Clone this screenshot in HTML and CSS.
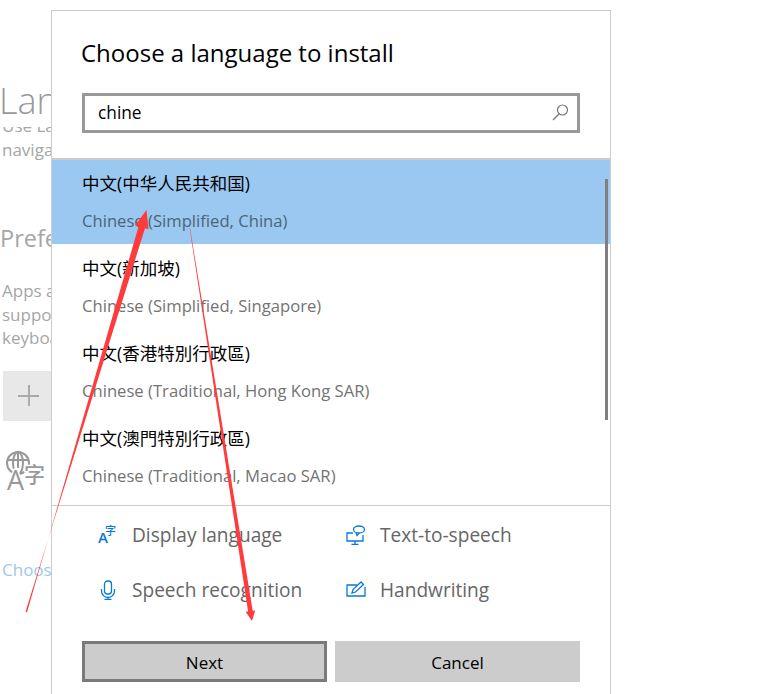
FILE: index.html
```html
<!DOCTYPE html>
<html lang="en">
<head>
  <meta charset="UTF-8">
  <meta name="viewport" content="width=device-width, initial-scale=1.0">
  <title>Choose a language to install</title>
  <link rel="stylesheet" href="styles.css">
</head>
<body>
  <!-- settings page behind the dialog, cut off at the dialog edge -->
  <aside class="behind">
    <div class="behind-title">Language</div>
    <p class="behind-desc">Use Language settings to<br>navigate apps</p>
    <div class="behind-head">Preferred languages</div>
    <p class="behind-text">Apps and websites<br>support this language<br>keyboard</p>
    <div class="behind-add"><span class="plus"></span></div>
    <div class="behind-icon">
      <svg width="46" height="46" viewBox="0 0 46 46" fill="none" stroke="#999" stroke-width="2">
        <circle cx="14" cy="14" r="11"/>
        <ellipse cx="14" cy="14" rx="5" ry="11"/>
        <path d="M3 11H25M14 3V19"/>
        <text x="3" y="41" class="icon-a">A</text>
        <text x="20" y="33" class="icon-zi">字</text>
      </svg>
    </div>
    <a class="behind-link">Choose a</a>
  </aside>

  <section class="dialog">
    <h1 class="dialog-title">Choose a language to install</h1>
    <div class="search">
      <span class="search-value">chine</span>
      <svg width="18" height="18" viewBox="0 0 18 18" fill="none" stroke="#777" stroke-width="1.2">
        <circle cx="10.500" cy="7" r="5"/>
        <path d="M7 11L1 17"/>
      </svg>
    </div>

    <div class="lang-list">
      <div class="lang-item selected">
        <div class="lang-name sc">中文(中华人民共和国)</div>
        <div class="lang-sub">Chinese (Simplified, China)</div>
      </div>
      <div class="lang-item">
        <div class="lang-name sc">中文(新加坡)</div>
        <div class="lang-sub">Chinese (Simplified, Singapore)</div>
      </div>
      <div class="lang-item">
        <div class="lang-name tc">中文(香港特別行政區)</div>
        <div class="lang-sub">Chinese (Traditional, Hong Kong SAR)</div>
      </div>
      <div class="lang-item">
        <div class="lang-name tc">中文(澳門特別行政區)</div>
        <div class="lang-sub">Chinese (Traditional, Macao SAR)</div>
      </div>
      <div class="scrollbar"></div>
    </div>

    <div class="features">
      <div class="feature">
        <svg width="20" height="20" viewBox="0 0 20 20" fill="#0a78d7">
          <text x="0" y="18" class="ficon-a">A</text>
          <text x="7" y="10" class="ficon-zi">字</text>
        </svg>
        <span>Display language</span>
      </div>
      <div class="feature">
        <svg width="20" height="20" viewBox="0 0 20 20" fill="none" stroke="#0a78d7" stroke-width="1.3">
          <path d="M7 8H1V16H17V10"/>
          <ellipse cx="13" cy="4.500" rx="5.500" ry="3.500"/>
          <path d="M10 8L11 10.500L13 8"/>
          <path d="M9 16V19M5.500 19.300H12.500"/>
        </svg>
        <span>Text-to-speech</span>
      </div>
      <div class="feature">
        <svg width="20" height="20" viewBox="0 0 20 20" fill="none" stroke="#0a78d7" stroke-width="1.3">
          <rect x="6.500" y="1" width="7" height="13" rx="3"/>
          <path d="M3.500 9V11A6 6 0 0 0 16.500 11V9M10 17V19.500M6.500 19.500H13.500"/>
        </svg>
        <span>Speech recognition</span>
      </div>
      <div class="feature">
        <svg width="20" height="20" viewBox="0 0 20 20" fill="none" stroke="#0a78d7" stroke-width="1.3">
          <path d="M11 5H1V16H19V7"/>
          <path d="M6 13L7 9.500L15 2L17.500 4.500L9.500 12Z"/>
        </svg>
        <span>Handwriting</span>
      </div>
    </div>

    <div class="actions">
      <button class="btn btn-next">Next</button>
      <button class="btn">Cancel</button>
    </div>
  </section>

  <!-- annotation arrows drawn on top of the screenshot -->
  <svg class="arrows" width="781" height="694" viewBox="0 0 781 694" fill="#ff3b3b">
    <polygon points="25.500,611.800 145,228.150 148.500,229.200 146.500,210 135.100,225.200 138.600,226.250 27,612.200"/>
    <polygon points="190,228 252.700,610.800 255.200,610.400 252,621 245.600,611.800 248.100,611.400 189.600,228"/>
  </svg>
</body>
</html>
```

FILE: styles.css
```css
:root {
  --line: #ccc;
  --muted: #999;
  --feature: #666;
  --blue: #0a78d7;
}
* { box-sizing: border-box; margin: 0; padding: 0; }
html, body { height: 100%; }
body { background: #fff; color: #000; display: flex; overflow: hidden; font-family: "Open Sans", "Noto Sans CJK SC", sans-serif; }

/* page behind the dialog */
.behind { width: 51px; flex: none; overflow: hidden; white-space: nowrap; color: #a6a6a6; padding: 78px 0 0 0; }
.behind-title { position: relative; background: #fff; color: var(--muted); font-size: 36px; font-weight: 300; line-height: 46px; height: 49px; width: 200px; margin-left: -1px; }
.behind-desc { font-size: 17px; line-height: 24px; margin-top: -13px; padding-left: 2px; }
.behind-head { font-size: 23.500px; line-height: 32px; margin-top: 60px; }
.behind-text { font-size: 17px; line-height: 23.500px; margin-top: 25px; padding-left: 2px; }
.behind-add { width: 60px; height: 50px; background: #e8e8e8; margin: 21px 0 0 3px; display: flex; align-items: center; padding-left: 15px; }
.plus { display: block; width: 21px; height: 21px; background: linear-gradient(#aaa, #aaa) center / 100% 2px no-repeat, linear-gradient(#aaa, #aaa) center / 2px 100% no-repeat; }
.behind-icon { height: 46px; margin: 28px 0 0 4px; }
.icon-a, .icon-zi { stroke: #fff; stroke-width: 3px; paint-order: stroke; fill: #999; font-weight: 500; }
.icon-a { font-family: "Open Sans", sans-serif; font-size: 27px; }
.icon-zi { font-family: "Noto Sans CJK SC", sans-serif; font-size: 21px; }
.behind-link { display: block; color: #9cc9f0; font-size: 17px; line-height: 24px; margin-top: 63px; padding-left: 2px; }

/* dialog */
.dialog { width: 560px; height: 684px; margin-top: 10px; flex: none; border: 1px solid var(--line); border-bottom: none; background: #fff; }
.dialog-title { font-size: 24px; font-weight: 400; line-height: 32px; margin: 26px 0 0 29px; }
.search { height: 40px; margin: 24px 30px 0 30px; border: 3px solid var(--muted); display: flex; align-items: center; justify-content: space-between; padding: 0 7px 2px 13px; }
.search-value { font-size: 17.300px; }

.lang-list { position: relative; height: 348px; margin-top: 25px; border-top: 2px solid var(--line); border-bottom: 1px solid var(--line); overflow: hidden; }
.lang-item { height: 85px; padding: 10px 0 0 30px; }
.lang-item.selected { background: #9bc8f0; height: 84px; margin-bottom: 1px; }
.lang-name { font-size: 17.500px; line-height: 26px; }
.lang-name.tc { font-family: "Open Sans", "Noto Sans CJK TC", sans-serif; }
.lang-sub { color: #737373; font-size: 16.650px; line-height: 24px; margin-top: 13px; }
.selected .lang-sub { color: #4c6478; }
.scrollbar { position: absolute; top: 19px; right: 2px; width: 3px; height: 241px; background: #808080; }

.features { display: grid; grid-template-columns: 248px 1fr; grid-auto-rows: 55px; padding: 1px 0 0 46px; }
.feature { display: flex; align-items: center; gap: 14px; color: var(--feature); font-size: 19.100px; }
.ficon-a { font-family: "Open Sans", sans-serif; font-size: 15px; font-weight: 600; }
.ficon-zi { font-family: "Noto Sans CJK SC", sans-serif; font-size: 11px; font-weight: 500; }

.actions { display: flex; gap: 8px; margin: 24px 30px 0 30px; }
.btn { width: 245px; height: 41px; border: none; padding-top: 2px; background: #ccc; color: #000; font: inherit; font-size: 17px; }
.btn-next { border: 3px solid #7a7a7a; }

.arrows { position: absolute; left: 0; top: 0; pointer-events: none; }
```
